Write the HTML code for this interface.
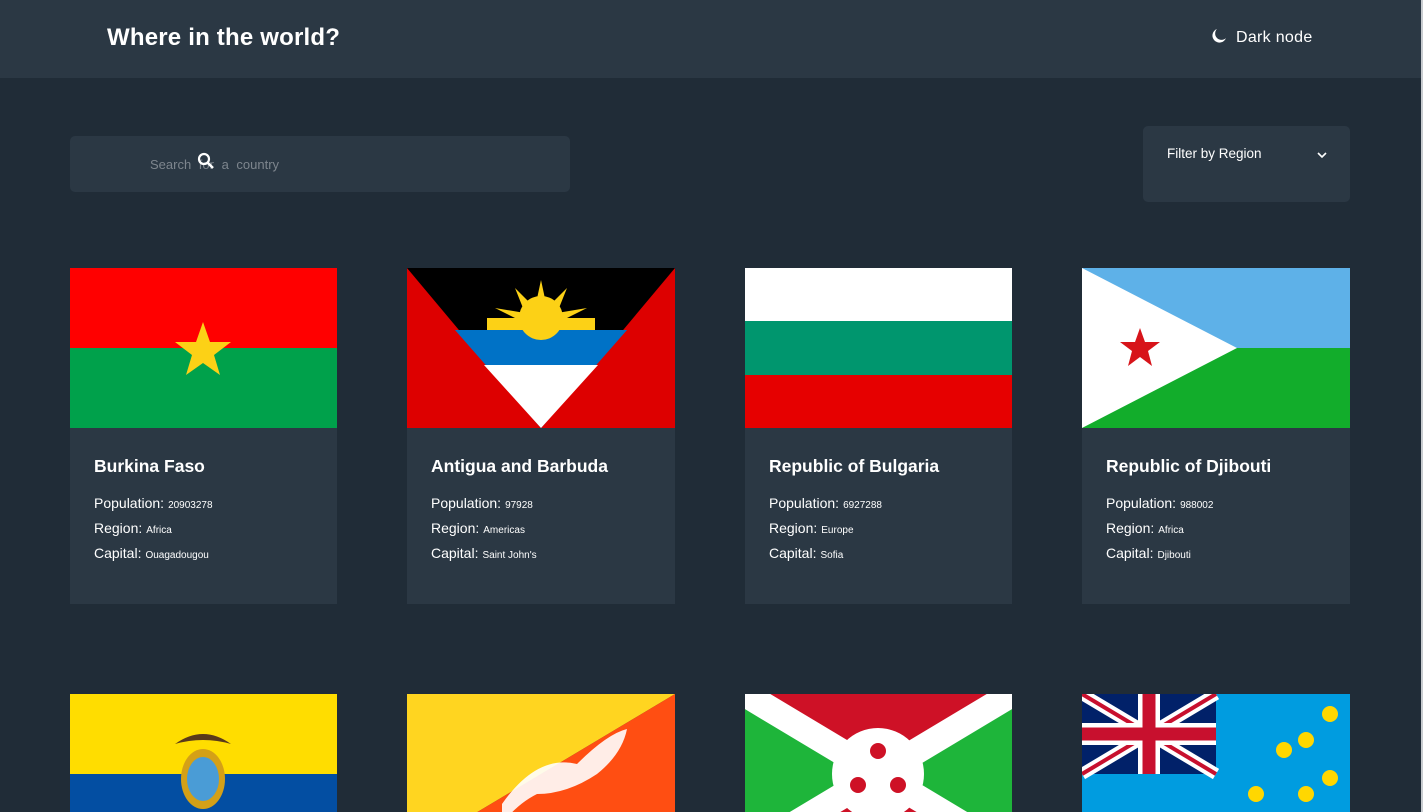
<!DOCTYPE html>
<html><head><meta charset="utf-8"><style>
*{margin:0;padding:0;box-sizing:border-box}
html,body{width:1423px;height:812px;overflow:hidden}
body{background:#202c37;font-family:"Liberation Sans",sans-serif;color:#fff;position:relative}
.edge{position:absolute;right:0;top:0;width:2px;height:812px;background:#c8ccd0}
header{height:78px;background:#2b3844;position:relative}
header h1{position:absolute;left:107px;top:24px;font-size:24px;font-weight:bold;letter-spacing:0.2px}
.mode{position:absolute;left:1211px;top:28px;font-size:16px;letter-spacing:0.3px}
.mode svg{vertical-align:-2px;margin-right:9px}
.search{position:absolute;left:70px;top:136px;width:500px;height:56px;background:#2b3844;border-radius:5px}
.search span{position:absolute;left:80px;top:21px;font-size:13px;color:#7d858d;word-spacing:4px}
.search svg{position:absolute;left:127px;top:16px}
.filter{position:absolute;left:1143px;top:126px;width:207px;height:76px;background:#2b3844;border-radius:5px}
.filter span{position:absolute;left:24px;top:20px;font-size:13.5px}
.filter svg{position:absolute;left:174px;top:25px}
.card{position:absolute;width:267px;background:#2b3844;overflow:hidden}
.card svg{display:block}
.body{height:176px;padding:28px 24px}
.body h2{font-size:17.5px;font-weight:bold;margin-bottom:18px}
.body p{font-size:14px;margin-bottom:8px;height:17px}
.body p small{font-size:10px;margin-left:4px}
</style></head><body>
<header><h1>Where in the world?</h1>
<div class="mode"><svg width="16" height="16" viewBox="0 0 16 16"><path d="M6 1A7 7 0 1 0 15 10 6 6 0 0 1 6 1Z" fill="#fff"/></svg>Dark node</div></header>
<div class="search"><span>Search for a country</span><svg width="20" height="20" viewBox="0 0 20 20"><circle cx="7" cy="7" r="5" stroke="#fff" stroke-width="2.2" fill="none"/><path d="M10.5 10.5L16 16" stroke="#fff" stroke-width="2.5"/></svg></div>
<div class="filter"><span>Filter by Region</span><svg width="10" height="8" viewBox="0 0 10 8"><path d="M1 2L5 6 9 2" stroke="#fff" stroke-width="1.6" fill="none"/></svg></div>

<div class="card" style="left:70px;top:268px"><svg width="267" height="160"><rect width="267" height="80" fill="#ff0000"/><rect y="80" width="267" height="80" fill="#00a14b"/><polygon points="133,54 140,74 161,74 144,87 150,107 133,95 116,107 122,87 105,74 126,74" fill="#fcd116"/></svg>
<div class="body"><h2>Burkina Faso</h2><p>Population:<small>20903278</small></p><p>Region:<small>Africa</small></p><p>Capital:<small>Ouagadougou</small></p></div></div>

<div class="card" style="left:407px;top:268px;width:268px"><svg width="268" height="160"><rect width="268" height="160" fill="#dd0000"/><polygon points="0,0 268,0 134,160" fill="#000"/><polygon points="48,62 220,62 134,160" fill="#0072c6"/><polygon points="77,97 191,97 134,160" fill="#fff"/><circle cx="134" cy="50" r="22" fill="#fcd116"/><polygon points="134,12 140,40 160,20 150,45 180,40 150,55 118,55 88,40 118,45 108,20 128,40" fill="#fcd116"/><rect x="70" y="50" width="128" height="12" fill="#000"/><rect x="80" y="50" width="108" height="12" fill="#fcd116"/></svg>
<div class="body"><h2>Antigua and Barbuda</h2><p>Population:<small>97928</small></p><p>Region:<small>Americas</small></p><p>Capital:<small>Saint John's</small></p></div></div>

<div class="card" style="left:745px;top:268px"><svg width="267" height="160"><rect width="267" height="54" fill="#fff"/><rect y="53" width="267" height="54" fill="#00966e"/><rect y="107" width="267" height="53" fill="#e60000"/></svg>
<div class="body"><h2>Republic of Bulgaria</h2><p>Population:<small>6927288</small></p><p>Region:<small>Europe</small></p><p>Capital:<small>Sofia</small></p></div></div>

<div class="card" style="left:1082px;top:268px;width:268px"><svg width="268" height="160"><rect width="268" height="80" fill="#5eb1e8"/><rect y="80" width="268" height="80" fill="#12ad2b"/><polygon points="0,0 155,80 0,160" fill="#fff"/><polygon points="58,60 63,74 78,74 66,83 70,98 58,89 46,98 50,83 38,74 53,74" fill="#d7141a"/></svg>
<div class="body"><h2>Republic of Djibouti</h2><p>Population:<small>988002</small></p><p>Region:<small>Africa</small></p><p>Capital:<small>Djibouti</small></p></div></div>

<div class="card" style="left:70px;top:694px"><svg width="267" height="160"><rect width="267" height="80" fill="#ffdd00"/><rect y="80" width="267" height="40" fill="#034ea2"/><rect y="120" width="267" height="40" fill="#ed1c24"/><ellipse cx="133" cy="85" rx="22" ry="30" fill="#d4a017"/><ellipse cx="133" cy="85" rx="16" ry="22" fill="#4a9cd6"/><path d="M105 50 Q133 30 161 50 Q133 42 105 50Z" fill="#5a3a1a"/></svg></div>

<div class="card" style="left:407px;top:694px;width:268px"><svg width="268" height="160"><polygon points="0,0 268,0 0,160" fill="#ffd520"/><polygon points="268,0 268,160 0,160" fill="#ff4e12"/><path d="M95 110 Q130 60 170 70 Q200 40 220 35 Q215 60 190 80 Q160 100 130 100 Q110 110 95 130Z" fill="#fff" opacity="0.9"/></svg></div>

<div class="card" style="left:745px;top:694px"><svg width="267" height="160"><rect width="267" height="160" fill="#1eb53a"/><polygon points="0,0 267,0 133,80" fill="#ce1126"/><polygon points="0,160 267,160 133,80" fill="#ce1126"/><path d="M0 0L267 160M267 0L0 160" stroke="#fff" stroke-width="26"/><circle cx="133" cy="80" r="46" fill="#fff"/><circle cx="133" cy="57" r="8" fill="#ce1126"/><circle cx="113" cy="91" r="8" fill="#ce1126"/><circle cx="153" cy="91" r="8" fill="#ce1126"/></svg></div>

<div class="card" style="left:1082px;top:694px;width:268px"><svg width="268" height="160"><rect width="268" height="160" fill="#009ce0"/><rect width="134" height="80" fill="#012169"/><path d="M0 0L134 80M134 0L0 80" stroke="#fff" stroke-width="12"/><path d="M0 0L134 80M134 0L0 80" stroke="#c8102e" stroke-width="4"/><path d="M67 0V80M0 40H134" stroke="#fff" stroke-width="22"/><path d="M67 0V80M0 40H134" stroke="#c8102e" stroke-width="13"/><g fill="#ffd700"><circle cx="248" cy="20" r="8"/><circle cx="224" cy="46" r="8"/><circle cx="202" cy="56" r="8"/><circle cx="248" cy="84" r="8"/><circle cx="224" cy="100" r="8"/><circle cx="174" cy="100" r="8"/></g></svg></div>
<div class="edge"></div>
</body></html>
